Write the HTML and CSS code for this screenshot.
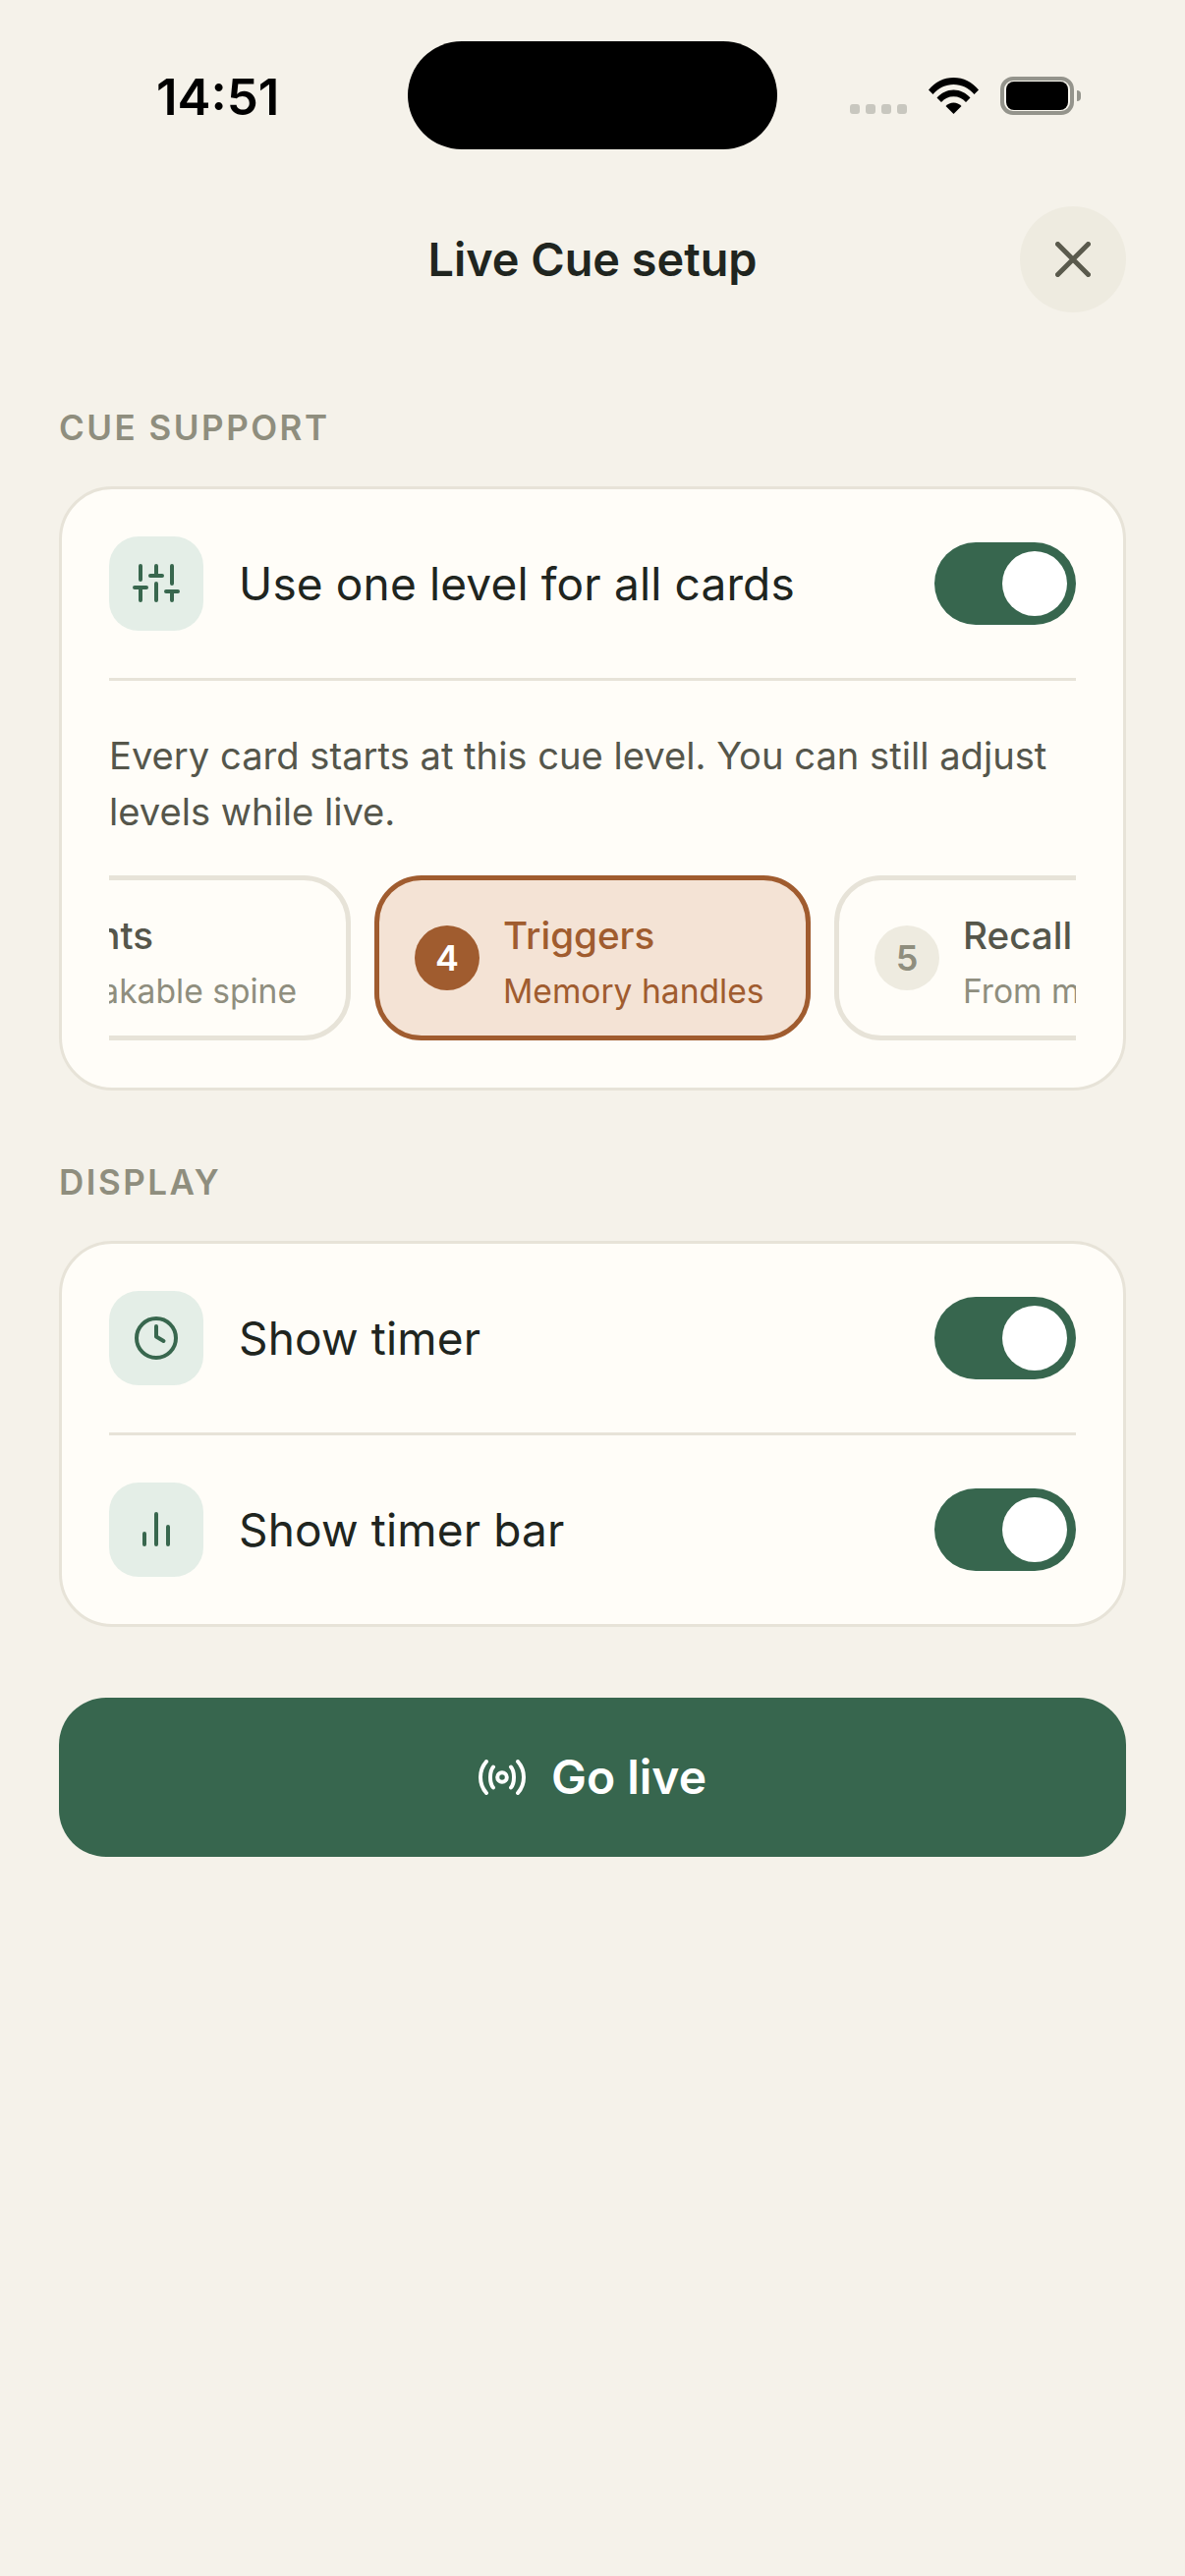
FILE: index.html
```html
<!DOCTYPE html>
<html lang="en">
<head>
<meta charset="utf-8">
<title>Live Cue setup</title>
<link rel="stylesheet" href="styles.css">
</head>
<body>
<div class="screen">
  <div class="status">
    <span class="time">14:51</span>
    <div class="island"></div>
    <div class="status-icons">
      <div class="dots"><i></i><i></i><i></i><i></i></div>
      <svg class="wifi" width="51" height="37" viewBox="0 0 51 37"><path d="M0 12.500C6.500 4.500 15.500 0 25.500 0S44.500 4.500 51 12.500L46.500 17C41 10.500 33.500 7 25.500 7S10 10.500 4.500 17Z"/><path d="M8.500 20.500C12.800 15.600 19 12.500 25.500 12.500S38.200 15.600 42.500 20.500L38 25C34.800 21.300 30.300 19.300 25.500 19.300S16.200 21.300 13 25Z"/><path d="M17.500 29C19.600 26.800 22.400 25.500 25.500 25.500S31.400 26.800 33.500 29L25.500 37Z"/></svg>
      <div class="battery"><div class="battery-body"><div class="battery-fill"></div></div><div class="battery-cap"></div></div>
    </div>
  </div>

  <header class="top">
    <h1 class="title">Live Cue setup</h1>
    <button class="close" aria-label="Close"><svg width="36" height="36" viewBox="0 0 36 36"><path d="M2.500 2.500L33.500 33.500M33.500 2.500L2.500 33.500"/></svg></button>
  </header>

  <section class="section">
    <h2 class="label">CUE SUPPORT</h2>
    <div class="card">
      <div class="row">
        <div class="tile"><svg width="48" height="48" viewBox="0 0 48 48"><path d="M8 6V20M2 28H14M8 28V41M24 6V16M18 16H30M24 24V41M40 6V24M34 32H46M40 32V41"/></svg></div>
        <span class="row-label">Use one level for all cards</span>
        <div class="toggle"><div class="knob"></div></div>
      </div>
      <div class="divider"></div>
      <p class="help">Every card starts at this cue level. You can still adjust levels while live.</p>
      <div class="chips">
        <div class="chip chip-left">
          <div class="num">3</div>
          <div class="chip-text"><div class="chip-title">Accents</div><div class="chip-sub">Unbreakable spine</div></div>
        </div>
        <div class="chip chip-active">
          <div class="num">4</div>
          <div class="chip-text"><div class="chip-title">Triggers</div><div class="chip-sub">Memory handles</div></div>
        </div>
        <div class="chip chip-right">
          <div class="num">5</div>
          <div class="chip-text"><div class="chip-title">Recall</div><div class="chip-sub">From memory</div></div>
        </div>
      </div>
    </div>
  </section>

  <section class="section">
    <h2 class="label">DISPLAY</h2>
    <div class="card">
      <div class="row">
        <div class="tile"><svg width="48" height="48" viewBox="0 0 48 48"><circle cx="24" cy="24" r="20"/><path d="M24 12V22.500L31.500 27"/></svg></div>
        <span class="row-label">Show timer</span>
        <div class="toggle"><div class="knob"></div></div>
      </div>
      <div class="divider"></div>
      <div class="row row-last">
        <div class="tile"><svg width="48" height="48" viewBox="0 0 48 48"><path d="M12 28V39M24 8V39M36 21V39"/></svg></div>
        <span class="row-label">Show timer bar</span>
        <div class="toggle"><div class="knob"></div></div>
      </div>
    </div>
  </section>

  <button class="go">
    <svg width="48" height="36" viewBox="0 0 48 36"><circle cx="24" cy="18" r="4.800"/><path d="M15 7.500C11 12 11 24 15 28.500M33 7.500C37 12 37 24 33 28.500M8 2C0 11 0 25 8 34M40 2C48 11 48 25 40 34"/></svg>
    <span class="go-text">Go live</span>
  </button>
</div>
</body>
</html>
```

FILE: styles.css
```css
* { box-sizing: border-box; }
html, body { margin: 0; padding: 0; }
body {
  background: #f5f2ea;
  font-family: "Inter", "Noto Sans", sans-serif;
  color: #20251f;
}
.screen { width: 1206px; height: 2622px; padding: 42px 60px 0; display: flex; flex-direction: column; }

.status { height: 110px; display: flex; align-items: flex-start; padding-left: 99px; }
.time { width: 256px; margin-top: 24px; font-family: "Inter", sans-serif; font-weight: 600; font-size: 51px; line-height: 66px; color: #000; }
.island { width: 376px; height: 110px; border-radius: 55px; background: #000; }
.status-icons { margin-left: 74px; margin-top: 36px; height: 39px; display: flex; align-items: flex-end; }
.dots { display: flex; gap: 6px; margin-bottom: 1px; }
.dots i { display: block; width: 10px; height: 10px; border-radius: 3px; background: #c8c7bf; }
.wifi { margin-left: 22px; margin-bottom: 1px; fill: #000; }
.battery { margin-left: 22px; display: flex; align-items: center; height: 39px; }
.battery-body { width: 75px; height: 39px; border: 4px solid #94948c; border-radius: 13px; padding: 1px 2px; background: #faf8f0; }
.battery-fill { width: 100%; height: 100%; border-radius: 8px; background: #000; }
.battery-cap { margin-left: 3px; width: 4px; height: 11px; border-radius: 0 4px 4px 0; background: #94948c; }

.top { margin-top: 58px; height: 108px; display: flex; align-items: center; justify-content: center; position: relative; }
.title { margin: 0; font-size: 46.800px; font-weight: 600; line-height: 60px; color: #20251f; }
.close { position: absolute; right: 0; top: 0; width: 108px; height: 108px; padding: 0; border: 0; border-radius: 50%; background: #eeebe0; display: flex; align-items: center; justify-content: center; }
.close svg { fill: none; stroke: #5a5a4d; stroke-width: 5; stroke-linecap: round; }

.section { display: flex; flex-direction: column; }
.label { margin: 0; height: 48px; font-size: 35px; line-height: 48px; font-weight: 600; letter-spacing: 2.500px; color: #8f8e7e; }
.section:nth-of-type(1) .label { margin-top: 93px; }
.section:nth-of-type(2) .label { margin-top: 69px; }
.card { margin-top: 36px; background: #fffdf8; border: 3px solid #e7e3d8; border-radius: 54px; padding: 48px; }

.row { display: flex; align-items: center; height: 96px; }
.tile { width: 96px; height: 96px; border-radius: 30px; background: #e4eee7; display: flex; align-items: center; justify-content: center; flex-shrink: 0; }
.tile svg { fill: none; stroke: #38674e; stroke-width: 4; stroke-linecap: round; stroke-linejoin: round; }
.row-label { margin-left: 36px; flex: 1; font-size: 46px; letter-spacing: 0.150px; line-height: 60px; color: #20251f; }
.toggle { width: 144px; height: 84px; border-radius: 42px; background: #37664e; padding: 9px; display: flex; justify-content: flex-end; }
.knob { width: 66px; height: 66px; border-radius: 50%; background: #fff; }
.divider { height: 3px; background: #e7e3d8; margin-top: 48px; }
.row-last { margin-top: 48px; }

.help { margin: 48px 0 0; height: 114px; font-size: 38.150px; line-height: 57px; color: #55564b; }
.chips { margin-top: 36px; display: flex; justify-content: center; gap: 24px; overflow: hidden; }
.chip { flex-shrink: 0; width: 444px; height: 168px; border: 5px solid #e7e3d8; border-radius: 48px; padding: 0 36px; display: flex; align-items: center; gap: 24px; background: #fffdf8; }
.chip-left { justify-content: flex-end; padding-right: 50px; }
.chip-active { border-color: #a05c2f; background: #f4e3d5; }
.num { width: 66px; height: 66px; border-radius: 50%; background: #eeebe0; color: #8f8e7e; font-size: 36px; font-weight: 600; display: flex; align-items: center; justify-content: center; flex-shrink: 0; }
.chip-active .num { background: #a05c2f; color: #fff; }
.chip-text { padding-top: 8px; }
.chip-title { font-size: 38.600px; line-height: 54px; font-weight: 500; color: #55564b; white-space: nowrap; }
.chip-sub { font-size: 33.600px; line-height: 48px; margin-top: 6px; color: #8f8e7e; white-space: nowrap; }
.chip-active .chip-title, .chip-active .chip-sub { color: #a05c2f; }

.go { margin-top: 72px; height: 162px; width: 100%; border: 0; border-radius: 48px; background: #37664e; color: #fff; display: flex; align-items: center; justify-content: center; gap: 26px; font-family: inherit; font-size: 48px; font-weight: 600; }
.go svg { fill: none; stroke: #fff; stroke-width: 4; stroke-linecap: round; }
.go-text { margin-bottom: 2px; }
```
